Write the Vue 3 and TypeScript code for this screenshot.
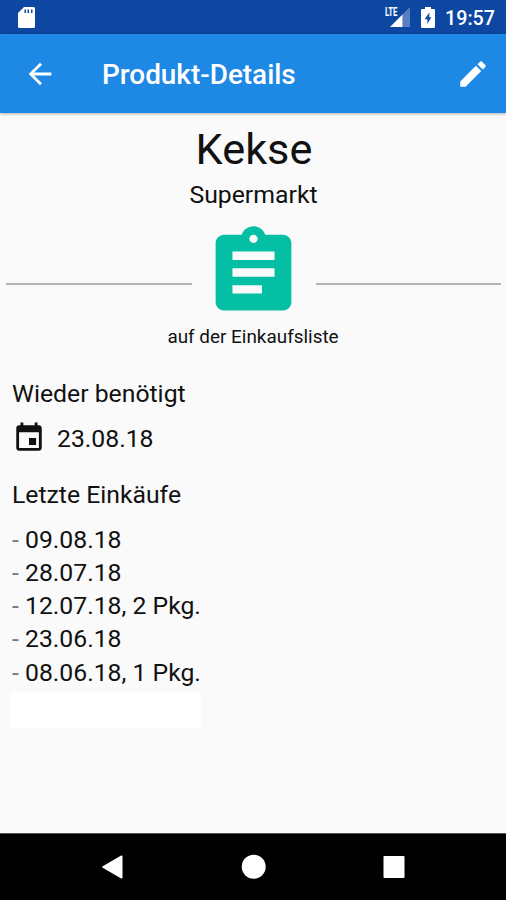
<script setup lang="ts">
interface Purchase {
  date: string
  amount?: string
}

const product = {
  name: 'Kekse',
  shop: 'Supermarkt',
  status: 'auf der Einkaufsliste',
  neededAgain: '23.08.18',
}

const purchases: Purchase[] = [
  { date: '09.08.18' },
  { date: '28.07.18' },
  { date: '12.07.18', amount: '2 Pkg.' },
  { date: '23.06.18' },
  { date: '08.06.18', amount: '1 Pkg.' },
]

const purchaseText = (p: Purchase): string => (p.amount ? ` ${p.date}, ${p.amount}` : ` ${p.date}`)
</script>

<template>
  <div class="screen">
    <div class="status-bar">
      <svg class="sd" viewBox="0 0 17 21">
        <path fill="#fff" fill-rule="evenodd" d="M6 0H15.500Q17 0 17 1.500V19.500Q17 21 15.500 21H1.500Q0 21 0 19.500V6ZM6.500 2.500V6H8V2.500ZM9.500 2.500V6H11V2.500ZM13 2.500V6H14.500V2.500Z" />
      </svg>
      <div class="status-right">
        <div class="signal">
          <svg viewBox="0 0 20 20">
            <path fill="#5a7fc0" d="M20 0V20H12.500V7.500Z" />
            <path fill="#fff" d="M12.500 7.500V20H0Z" />
          </svg>
          <span class="lte">LTE</span>
        </div>
        <svg class="battery" viewBox="0 0 14 21">
          <path fill="#fff" fill-rule="evenodd" d="M4 0H10V2H12.800Q14 2 14 3.200V19.800Q14 21 12.800 21H1.200Q0 21 0 19.800V3.200Q0 2 1.200 2H4ZM8.300 5.500L3.700 12.300H6.400V17L10.300 10.300H8.300Z" />
        </svg>
        <span class="clock">19:57</span>
      </div>
    </div>

    <header class="app-bar">
      <svg class="back" viewBox="0 0 24 24">
        <path fill="#fff" d="M20 11H7.830l5.590-5.590L12 4l-8 8 8 8 1.410-1.410L7.830 13H20v-2z" />
      </svg>
      <h1 class="title">Produkt-Details</h1>
      <svg class="edit" viewBox="0 0 24 24">
        <path fill="#fff" d="M3 17.250V21h3.750L17.810 9.940l-3.750-3.750L3 17.250zM20.710 7.040c.39-.39.39-1.020 0-1.410l-2.340-2.340c-.39-.39-1.020-.39-1.410 0l-1.830 1.830 3.750 3.750 1.830-1.830z" />
      </svg>
    </header>

    <main class="content">
      <h2 class="name">{{ product.name }}</h2>
      <p class="shop">{{ product.shop }}</p>
      <div class="divider">
        <span class="rule"></span>
        <svg class="clipboard" viewBox="0 0 24 24">
          <path fill="#05bfa5" d="M19 3h-4.180C14.400 1.840 13.300 1 12 1c-1.300 0-2.400.84-2.820 2H5c-1.100 0-2 .9-2 2v14c0 1.100.9 2 2 2h14c1.100 0 2-.9 2-2V5c0-1.100-.9-2-2-2zm-7 0c.55 0 1 .45 1 1s-.45 1-1 1-1-.45-1-1 .45-1 1-1zm2 14H7v-2h7v2zm3-4H7v-2h10v2zm0-4H7V7h10v2z" />
        </svg>
        <span class="rule"></span>
      </div>
      <p class="status">{{ product.status }}</p>

      <h3 class="heading">Wieder benötigt</h3>
      <div class="due">
        <svg class="calendar" viewBox="0 0 24 24">
          <path fill="#111" d="M17 12h-5v5h5v-5zM16 1v2H8V1H6v2H5c-1.110 0-1.990.9-1.990 2L3 19c0 1.100.89 2 2 2h14c1.100 0 2-.9 2-2V5c0-1.100-.9-2-2-2h-1V1h-2zm3 18H5V8h14v11z" />
        </svg>
        <span>{{ product.neededAgain }}</span>
      </div>

      <h3 class="heading recent">Letzte Einkäufe</h3>
      <ul class="purchases">
        <li v-for="p in purchases" :key="p.date"><span class="dash">-</span>{{ purchaseText(p) }}</li>
      </ul>
      <div class="blank"></div>
    </main>

    <nav class="nav-bar">
      <svg viewBox="0 0 24 24"><path fill="#fff" d="M1.700 11.200L20.200 .6Q21.500 0 21.500 1.400V22.600Q21.500 24 20.200 23.400L1.700 12.800Q.5 12 1.700 11.200Z" /></svg>
      <svg viewBox="0 0 24 24"><circle cx="11.700" cy="11.700" r="12" fill="#fff" /></svg>
      <svg viewBox="0 0 24 24"><rect x="1.500" y="1" width="21" height="22" rx=".8" fill="#fff" /></svg>
    </nav>
  </div>
</template>

<style>
body {
  margin: 0;
}
</style>

<style scoped>
.screen {
  display: flex;
  flex-direction: column;
  width: 506px;
  height: 900px;
  overflow: hidden;
  background: #fafafa;
  color: #111;
  font-family: Roboto, "Liberation Sans", sans-serif;
}
h1, h2, h3, p, ul {
  margin: 0;
  padding: 0;
  font-weight: 400;
}
svg {
  display: block;
  flex: none;
  overflow: visible;
}
.status-bar {
  box-sizing: border-box;
  flex: none;
  display: flex;
  justify-content: space-between;
  height: 34px;
  padding: 7px 11px 0 17.500px;
  background: #0d47a1;
}
.sd {
  width: 17px;
  height: 21px;
}
.status-right {
  display: flex;
}
.signal {
  position: relative;
  width: 25px;
  margin-right: 11.500px;
}
.signal svg {
  width: 20px;
  height: 20px;
  margin: 0 0 0 5px;
}
.lte {
  position: absolute;
  top: 0;
  left: 0;
  padding-right: 1px;
  background: #0d47a1;
  color: #fff;
  font-size: 12px;
  font-weight: 700;
  line-height: 11px;
  letter-spacing: -0.2px;
  transform: scaleX(0.65);
  transform-origin: left;
}
.battery {
  width: 14px;
  height: 21px;
  margin-right: 10px;
}
.clock {
  color: #fff;
  font-size: 19.700px;
  font-weight: 500;
  line-height: 23px;
}
.app-bar {
  position: relative;
  box-sizing: border-box;
  flex: none;
  display: flex;
  align-items: center;
  height: 79px;
  padding: 0 16px 0 23px;
  background: #1e88e5;
  box-shadow: 0 1px 3px rgba(0, 0, 0, 0.3);
}
.back {
  width: 34px;
  height: 34px;
}
.title {
  flex: 1;
  margin-left: 45px;
  color: #fff;
  font-size: 27.900px;
  font-weight: 500;
  line-height: 34px;
  padding-top: 2px;
}
.edit {
  width: 34px;
  height: 34px;
}
.content {
  flex: 1;
  padding-top: 10px;
}
.name {
  font-size: 43.300px;
  line-height: 54px;
  text-align: center;
  padding-left: 2px;
}
.shop {
  margin-top: 2px;
  font-size: 24.800px;
  line-height: 32px;
  text-align: center;
  padding-left: 1px;
}
.divider {
  display: flex;
  align-items: center;
  gap: 11.500px;
  height: 101px;
  margin: 11px 5px 0 6px;
}
.rule {
  flex: 1;
  height: 2px;
  margin-top: 23px;
  background: #b2b2b2;
}
.clipboard {
  width: 101px;
  height: 101px;
}
.status {
  margin-top: 2px;
  font-size: 18.900px;
  line-height: 24px;
  text-align: center;
}
.heading,
.due,
.purchases {
  padding-left: 12px;
  font-size: 24.750px;
  line-height: 33.400px;
}
.heading {
  margin-top: 28.400px;
}
.recent {
  margin-top: 22.500px;
}
.due {
  display: flex;
  align-items: center;
  gap: 11px;
  height: 34px;
  margin-top: 10.600px;
}
.calendar {
  width: 34px;
  height: 34px;
  margin-top: -1px;
}
.purchases {
  margin-top: 11.300px;
  line-height: 33.300px;
  list-style: none;
}
.dash {
  color: #777;
}
.blank {
  width: 191px;
  height: 36px;
  margin: 2.700px 0 0 10px;
  background: #fff;
}
.nav-bar {
  box-sizing: border-box;
  flex: none;
  display: flex;
  justify-content: space-between;
  height: 67px;
  padding: 21px 100px 0 101px;
  border-top: 1px solid #555;
  background: #000;
}
.nav-bar svg {
  width: 24px;
  height: 24px;
}
</style>
